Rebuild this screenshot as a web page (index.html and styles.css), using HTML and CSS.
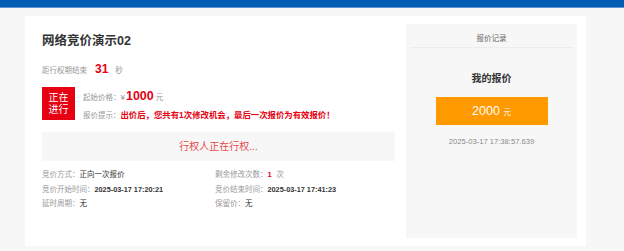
FILE: index.html
```html
<!DOCTYPE html>
<html>

<head>
    <title>网络竞价</title>
    <meta charset="utf-8" />
    <link rel="stylesheet" href="styles.css">
</head>

<body>
    <div class="topbar"></div>
    <div class="page">
        <div class="card">
            <div class="main">
                <h1 class="title">网络竞价演示02</h1>
                <div class="countdown">
                    <span class="label">距行权期结束</span><span class="seconds">31</span><span class="label">秒</span>
                </div>
                <div class="price-block">
                    <div class="status">正在<br>进行</div>
                    <div class="price-info">
                        <div class="price-row">
                            <span class="label">起始价格：</span><span class="yen">¥</span><span class="price">1000</span><span class="unit">元</span>
                        </div>
                        <div class="price-row">
                            <span class="label">报价提示：</span><span class="tip">出价后，您共有1次修改机会，最后一次报价为有效报价！</span>
                        </div>
                    </div>
                </div>
                <div class="notice">行权人正在行权...</div>
                <div class="details">
                    <div><span class="label">竞价方式：</span><span class="value">正向一次报价</span></div>
                    <div><span class="label">剩余修改次数：</span><span class="count">1</span> <span class="label">次</span></div>
                    <div><span class="label">竞价开始时间：</span><span class="value num">2025-03-17 17:20:21</span></div>
                    <div><span class="label">竞价结束时间：</span><span class="value num">2025-03-17 17:41:23</span></div>
                    <div><span class="label">延时周期：</span><span class="value">无</span></div>
                    <div><span class="label">保留价：</span><span class="value">无</span></div>
                </div>
            </div>
            <div class="records">
                <div class="records-head">报价记录</div>
                <div class="my-title">我的报价</div>
                <div class="my-price">2000 <span class="my-unit">元</span></div>
                <div class="my-time">2025-03-17 17:38:57.639</div>
            </div>
        </div>
    </div>
</body>

</html>
```

FILE: styles.css
```css
body {
    margin: 0;
    background-color: #f7f7f7;
    font-family: "Liberation Sans", "Noto Sans CJK SC", sans-serif;
    color: #333;
}

.topbar {
    height: 7px;
    background-color: #005bb5;
    border-bottom: 1px solid #5b93d3;
}

.page {
    padding: 8px 38px 5px 25px;
}

.card {
    display: flex;
    background-color: #fff;
    height: 214px;
    padding: 8px 9px 8px 17px;
}

.main {
    width: 353px;
    margin-right: 11px;
}

.title {
    margin: 7px 0 0;
    font-size: 12.5px;
    line-height: 20px;
    font-weight: bold;
    color: #333;
}

.label {
    font-size: 7.5px;
    color: #999;
}

.countdown {
    margin-top: 9px;
    line-height: 16px;
}

.seconds {
    font-size: 12px;
    font-weight: bold;
    color: #e60012;
    margin: 0 7px 0 8px;
}

.price-block {
    display: flex;
    margin-top: 8px;
}

.status {
    width: 33px;
    height: 33px;
    box-sizing: border-box;
    padding-top: 5px;
    background-color: #e60012;
    color: #fff;
    font-size: 10px;
    line-height: 11.5px;
    text-align: center;
}

.price-info {
    margin-left: 8px;
}

.price-row {
    line-height: 15px;
}

.yen {
    font-size: 8px;
    color: #999;
    margin-right: 1px;
}

.price {
    font-size: 12.5px;
    font-weight: bold;
    color: #e60012;
    margin-right: 2px;
}

.unit {
    font-size: 7.5px;
    color: #999;
}

.tip {
    font-size: 8.4px;
    font-weight: bold;
    color: #e60012;
}

.notice {
    margin-top: 9px;
    height: 29px;
    line-height: 29px;
    background-color: #f7f7f7;
    text-align: center;
    font-size: 10px;
    color: #e8474a;
}

.details {
    display: grid;
    grid-template-columns: 173px 1fr;
    margin-top: 5px;
    line-height: 11.5px;
}

.value {
    font-size: 7.5px;
    color: #333;
}

.num {
    font-weight: bold;
    font-size: 7.3px;
}

.count {
    font-size: 7.5px;
    font-weight: bold;
    color: #e60012;
}

.records {
    width: 171px;
    background-color: #f7f7f7;
    padding-top: 7px;
    text-align: center;
}

.records-head {
    margin: 0 4px;
    line-height: 16px;
    font-size: 7.5px;
    color: #666;
    border-bottom: 1px solid #ececec;
}

.my-title {
    margin-top: 24px;
    line-height: 14px;
    font-size: 10px;
    font-weight: bold;
    color: #333;
}

.my-price {
    width: 112px;
    height: 28px;
    margin: 11px auto 0;
    background-color: #ff9900;
    color: #fff;
    font-size: 12.5px;
    line-height: 28px;
}

.my-unit {
    font-size: 7.5px;
}

.my-time {
    margin-top: 11px;
    line-height: 12px;
    font-size: 7.6px;
    color: #888;
}
```
